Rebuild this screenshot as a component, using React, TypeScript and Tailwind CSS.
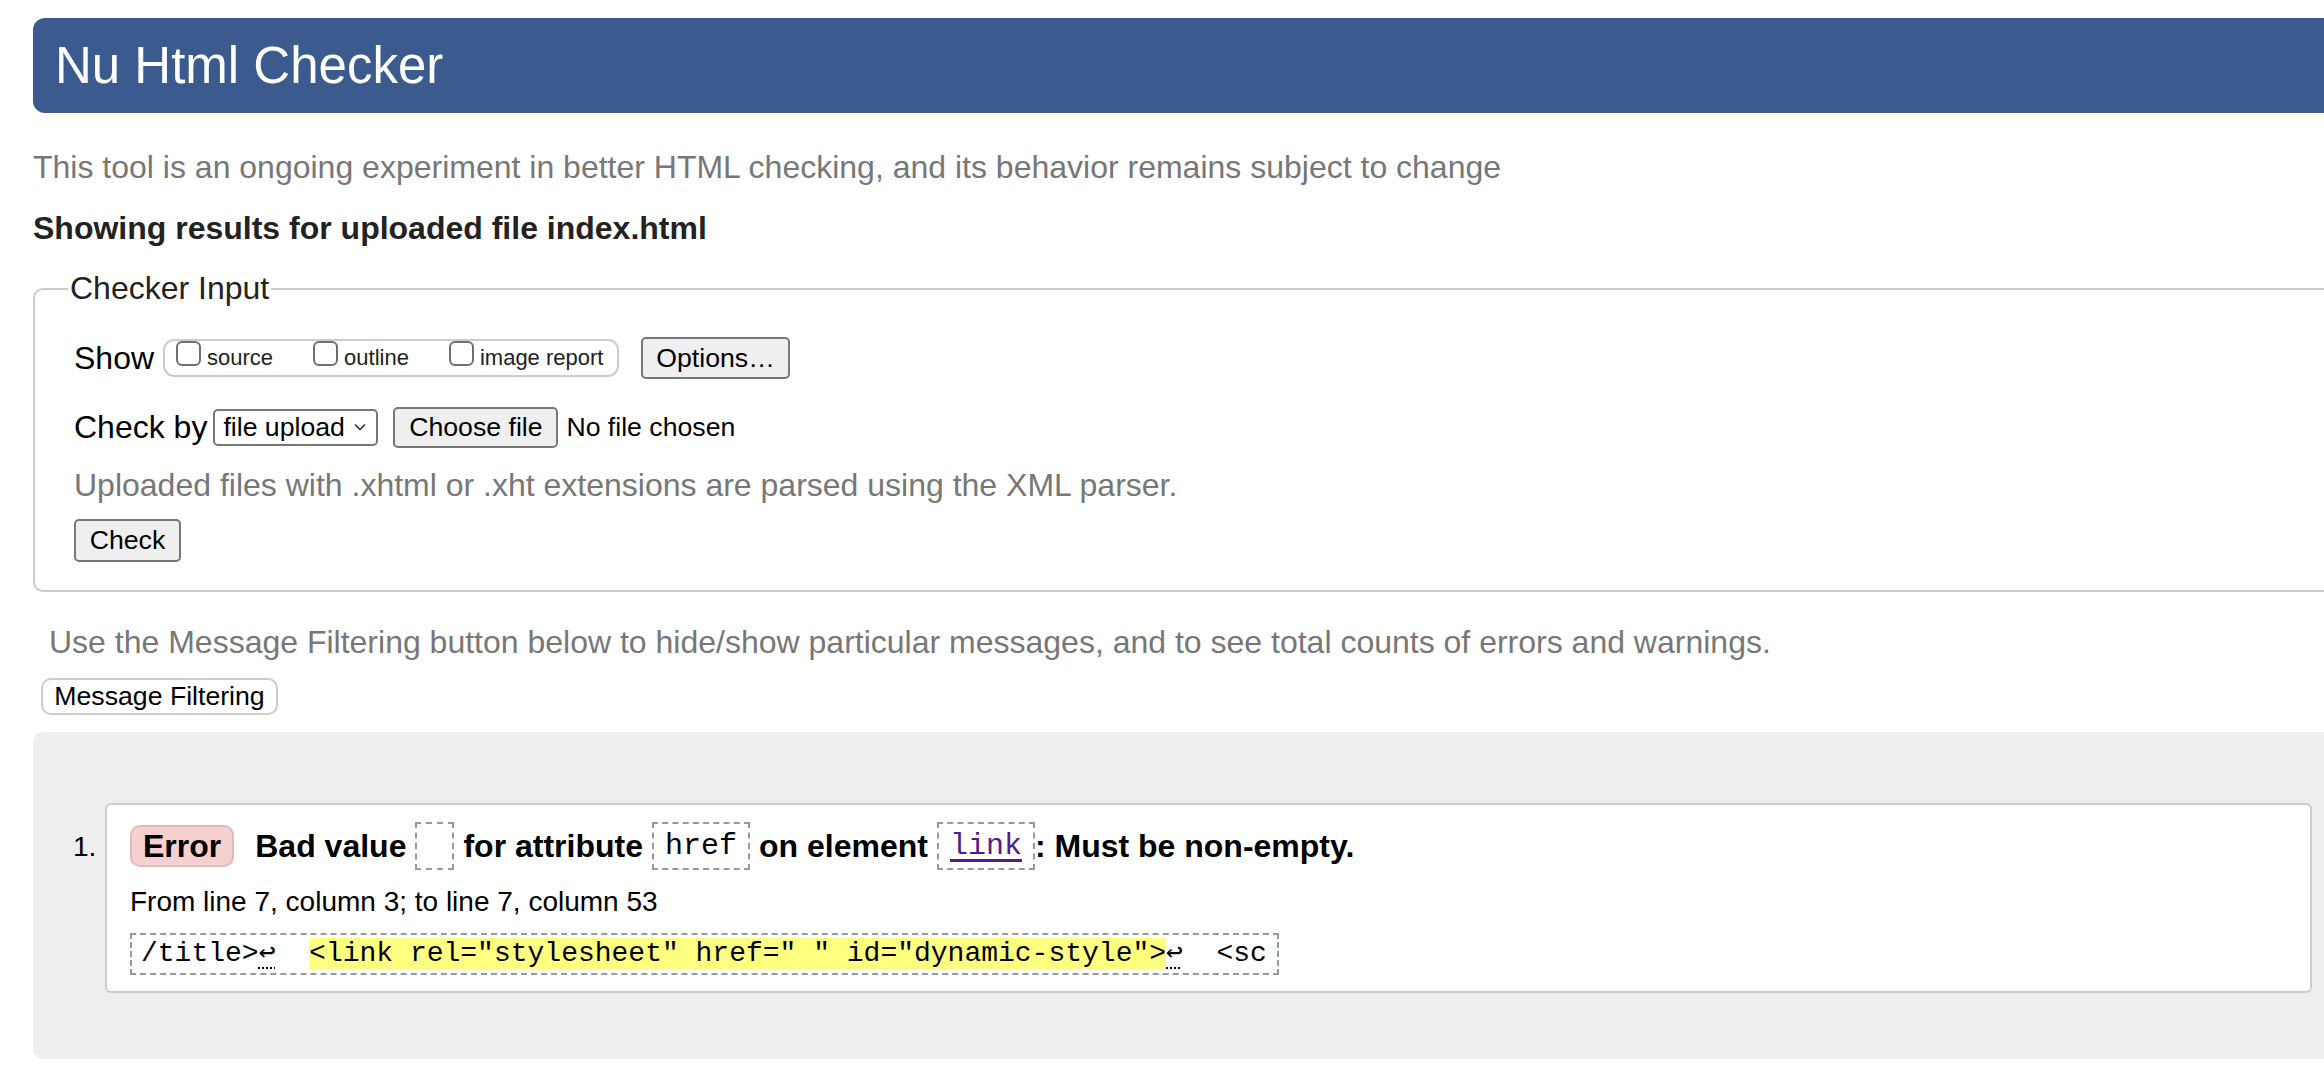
import React from "react";

const sans = "font-['Liberation_Sans',Arial,sans-serif]";
const mono = "font-['Liberation_Mono','Courier_New',monospace]";

const Checkbox: React.FC<{ label: string }> = ({ label }) => (
  <label className="flex items-end">
    <span className="mb-[3px] block h-[25px] w-[25px] rounded-[6px] border-2 border-[#707070] bg-white" />
    <span className="ml-[6px] text-[22px] leading-none text-[#222]">{label}</span>
  </label>
);

const GrayButton: React.FC<{ children: React.ReactNode; className?: string }> = ({ children, className }) => (
  <button
    className={`flex items-center justify-center rounded-[5px] border-2 border-[#777] bg-[#efefef] text-[26.67px] leading-none text-black ${className ?? ""}`}
  >
    {children}
  </button>
);

const Dashed: React.FC<{ children?: React.ReactNode; className?: string }> = ({ children, className }) => (
  <span
    className={`mx-[9px] inline-flex h-[48px] items-center border-2 border-dashed border-[#999] px-[11px] ${className ?? ""}`}
  >
    {children}
  </span>
);

export default function App() {
  return (
    <div className={`${sans} min-h-screen w-full overflow-hidden bg-white pl-[33px] pt-[18px] text-[32px] leading-[37px] text-[#222]`}>
      <h1 className="flex h-[95px] items-center rounded-l-[12px] bg-[#3b5b8f] pl-[22px] text-[51px] font-normal text-white">
        Nu Html Checker
      </h1>

      <p className="mt-[36px] text-[#777]">
        This tool is an ongoing experiment in better HTML checking, and its behavior remains subject to change
      </p>

      <h2 className="mt-[24px] font-bold text-[#222]">Showing results for uploaded file index.html</h2>

      <fieldset className="-mr-[20px] mt-[23px] rounded-[10px] border-2 border-[#ccc] pb-[28px] pl-[39px]">
        <legend className="-ml-[6px] px-[2px] text-[#222]">Checker Input</legend>

        <div className="mt-[30px] flex h-[42px] items-center">
          <span className="text-black">Show</span>
          <div className="ml-[9px] flex h-[38px] w-[456px] items-end gap-[40px] rounded-[11px] border-2 border-[#ccc] px-[11px] pb-[6px]">
            <Checkbox label="source" />
            <Checkbox label="outline" />
            <Checkbox label="image report" />
          </div>
          <GrayButton className="ml-[22px] h-[42px] w-[149px]">Options…</GrayButton>
        </div>

        <div className="mt-[27px] flex h-[42px] items-center">
          <span className="text-black">Check by</span>
          <div className="ml-[6px] flex h-[37px] w-[165px] items-center justify-between rounded-[5px] border-2 border-[#777] bg-white pl-[8px] pr-[10px] text-[26.67px] leading-none text-black">
            <span>file upload</span>
            <svg width="12" height="8" viewBox="0 0 12 8" fill="none" stroke="#222" strokeWidth="1.4">
              <path d="M1 1.5 L6 6.5 L11 1.5" />
            </svg>
          </div>
          <GrayButton className="ml-[15px] h-[41px] w-[165px]">Choose file</GrayButton>
          <span className="ml-[8px] text-[26.67px] leading-none text-black">No file chosen</span>
        </div>

        <p className="mt-[19px] text-[#777]">Uploaded files with .xhtml or .xht extensions are parsed using the XML parser.</p>

        <GrayButton className="mt-[15px] h-[43px] w-[107px]">Check</GrayButton>
      </fieldset>

      <p className="ml-[16px] mt-[32px] text-[#777]">
        Use the Message Filtering button below to hide/show particular messages, and to see total counts of errors and warnings.
      </p>

      <button className="ml-[8px] mt-[17px] flex h-[37px] w-[237px] items-center justify-center rounded-[10px] border-2 border-[#ccc] bg-white text-[26.67px] leading-none text-black">
        Message Filtering
      </button>

      <div className="mt-[17px] flex h-[327px] rounded-l-[10px] bg-[#eee] pr-[12px] pt-[71px]">
        <div className="mt-[19px] flex h-[48px] w-[72px] items-center pl-[40px] text-[28px] text-black">1.</div>
        <div className="h-[190px] flex-1 rounded-[6px] border-2 border-[#ccc] bg-white pl-[23px] pt-[17px]">
          <div className="flex h-[48px] items-center font-bold text-black">
            <span className="mr-[8px] flex h-[42px] items-center rounded-[10px] border-2 border-[#dcbcbc] bg-[#f6cfcf] px-[11px]">
              Error
            </span>
            <span className="ml-[13px]">Bad value</span>
            <Dashed className="w-[39px]" />
            <span>for attribute</span>
            <Dashed>
              <code className={`${mono} text-[30px] font-normal text-black`}>href</code>
            </Dashed>
            <span>on element</span>
            <Dashed>
              <a className={`${mono} text-[30px] font-normal text-[#551a8b] underline underline-offset-[5px]`}>link</a>
            </Dashed>
            <span className="-ml-[9px]">: Must be non-empty.</span>
          </div>

          <p className="mt-[16px] text-[28px] leading-[32px] text-black">From line 7, column 3; to line 7, column 53</p>

          <div className={`${mono} mt-[15px] inline-flex h-[42px] items-center whitespace-pre border-2 border-dashed border-[#999] pl-[9px] pr-[10px] text-[28px] leading-[32px] text-black`}>
            <span>/title&gt;</span>
            <span className="underline decoration-dotted decoration-2 underline-offset-[6px]">↩</span>
            <span>  </span>
            <span className="bg-[#ffff80]">&lt;link rel="stylesheet" href=" " id="dynamic-style"&gt;</span>
            <span className="underline decoration-dotted decoration-2 underline-offset-[6px]">↩</span>
            <span>  &lt;sc</span>
          </div>
        </div>
      </div>
    </div>
  );
}
